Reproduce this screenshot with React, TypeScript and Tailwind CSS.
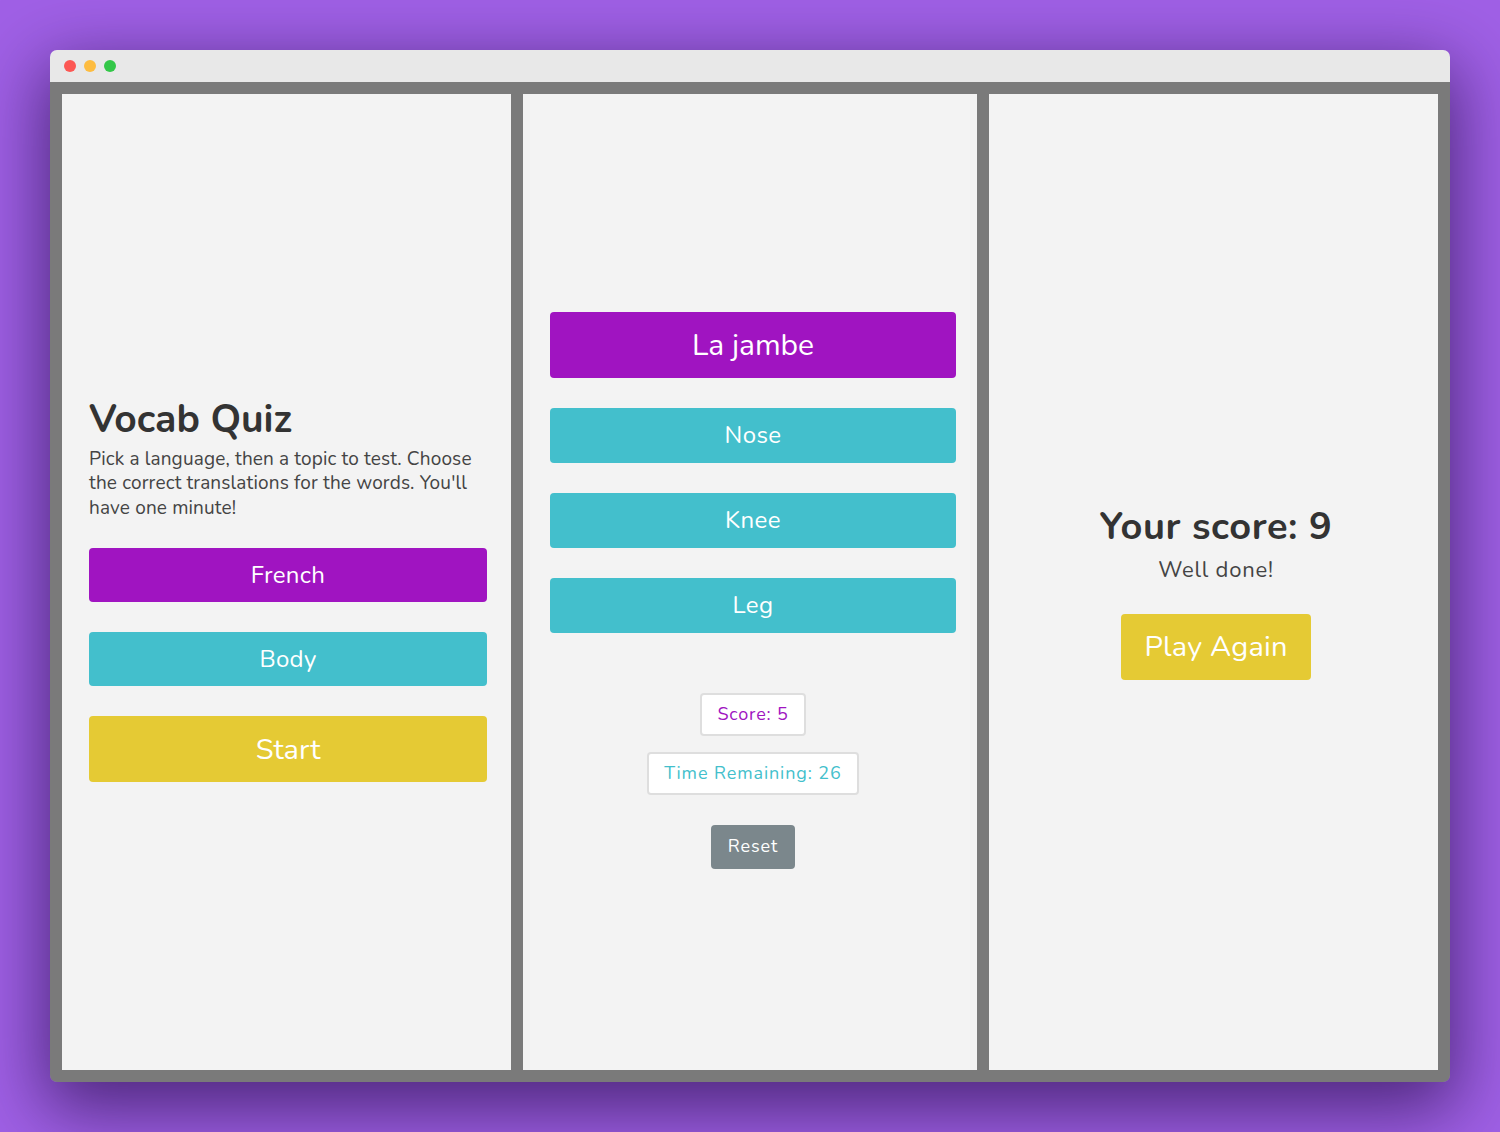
const font = "font-['Nunito','Lato','Open_Sans',sans-serif]";

function Btn({
  label,
  className,
}: {
  label: string;
  className: string;
}) {
  return (
    <button
      className={`flex w-full items-center justify-center rounded-[4px] text-white ${className}`}
    >
      {label}
    </button>
  );
}

function StartPanel() {
  return (
    <div className="flex w-[449px] flex-col justify-center bg-[#f3f3f3] pl-[27px] pr-[24px] pt-[14px]">
      <h1 className="text-[39px] font-bold leading-[48px] text-[#333]">Vocab Quiz</h1>
      <p className="mt-[3px] text-[19px] leading-[24.5px] tracking-[0.15px] text-[#444]">
        Pick a language, then a topic to test. Choose the correct translations for the
        words. You'll have one minute!
      </p>
      <div className="mt-[28px] flex flex-col gap-[30px]">
        <Btn label="French" className="h-[54px] bg-[#a014c1] text-[24px] tracking-[0.3px]" />
        <Btn label="Body" className="h-[54px] bg-[#43bfcc] text-[24px] tracking-[0.3px]" />
        <Btn label="Start" className="h-[66px] bg-[#e5ca34] text-[29px]" />
      </div>
    </div>
  );
}

function QuizPanel() {
  return (
    <div className="flex w-[454px] flex-col items-center justify-center bg-[#f3f3f3] pl-[27px] pr-[21px] pt-4">
      <div className="flex w-full flex-col gap-[30px]">
        <Btn label="La jambe" className="h-[66px] bg-[#a014c1] pt-[2px] text-[30px]" />
        <Btn label="Nose" className="h-[55px] bg-[#43bfcc] text-[24px] tracking-[0.4px]" />
        <Btn label="Knee" className="h-[55px] bg-[#43bfcc] text-[24px] tracking-[0.4px]" />
        <Btn label="Leg" className="h-[55px] bg-[#43bfcc] text-[24px] tracking-[0.4px]" />
      </div>
      <div className="mt-[60px] flex h-[43px] items-center rounded-[4px] border-2 border-[#dedede] bg-white px-[15px] text-[18px] tracking-[0.8px] text-[#a014c1]">
        Score: 5
      </div>
      <div className="mt-[16px] flex h-[43px] items-center rounded-[4px] border-2 border-[#dedede] bg-white px-[15px] text-[18px] tracking-[0.9px] text-[#43bfcc]">
        Time Remaining: 26
      </div>
      <button className="mt-[30px] flex h-[44px] items-center rounded-[4px] bg-[#7b878c] px-[17px] text-[18px] tracking-[0.9px] text-white">
        Reset
      </button>
    </div>
  );
}

function ScorePanel() {
  return (
    <div className="flex w-[449px] flex-col items-center justify-center bg-[#f3f3f3] pl-[5px] pt-[20px]">
      <h2 className="text-[38px] font-bold leading-[44px] tracking-[0.6px] text-[#333]">
        Your score: 9
      </h2>
      <p className="mt-[6px] text-[22px] leading-[30px] tracking-[0.8px] text-[#444]">
        Well done!
      </p>
      <button className="mt-[29px] flex h-[66px] w-[190px] items-center justify-center rounded-[4px] bg-[#e5ca34] text-[29px] tracking-[0.2px] text-white">
        Play Again
      </button>
    </div>
  );
}

export default function App() {
  return (
    <div className={`flex h-[1132px] w-[1500px] items-start justify-center bg-[#a060e6] pt-[50px] ${font}`}>
      <div className="w-[1400px] overflow-hidden rounded-[7px] shadow-[0_22px_70px_6px_rgba(20,0,50,0.6)]">
        <div className="flex h-[32px] items-center gap-[8px] bg-[#e8e8e8] pl-[14px]">
          <span className="h-[12px] w-[12px] rounded-full bg-[#fc5753]" />
          <span className="h-[12px] w-[12px] rounded-full bg-[#fdbc40]" />
          <span className="h-[12px] w-[12px] rounded-full bg-[#33c748]" />
        </div>
        <div className="flex h-[1000px] gap-[12px] bg-[#7a7a7a] p-[12px]">
          <StartPanel />
          <QuizPanel />
          <ScorePanel />
        </div>
      </div>
    </div>
  );
}
